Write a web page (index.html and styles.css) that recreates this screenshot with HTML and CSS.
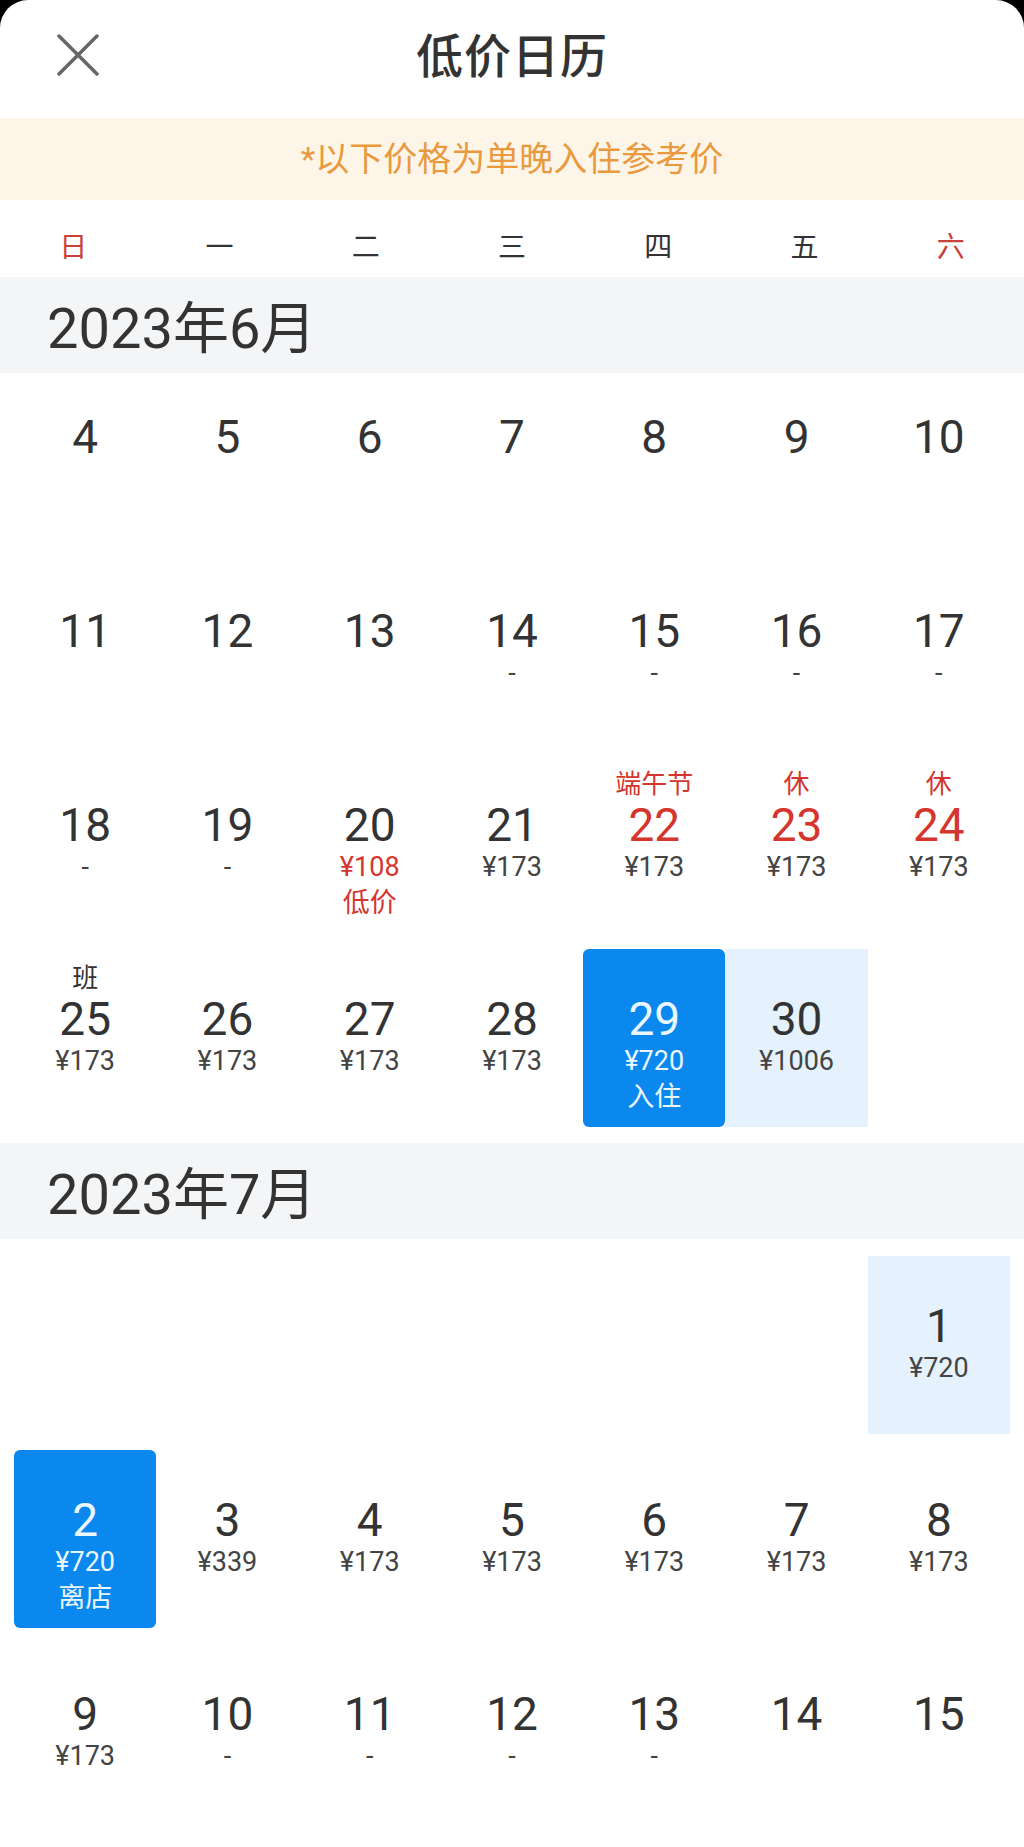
FILE: index.html
```html
<!DOCTYPE html>
<html lang="zh-CN">
<head>
  <meta charset="UTF-8">
  <title>低价日历</title>
  <link rel="stylesheet" href="styles.css">
</head>
<body>

  <div class="sheet">
    <div class="topbar">
      <button class="close" aria-label="关闭">
        <svg width="42" height="42" viewBox="0 0 42 42">
          <path d="M2 2 L40 40 M40 2 L2 40" stroke="#666" stroke-width="3.5" stroke-linecap="round" fill="none"/>
        </svg>
      </button>
      <h1>低价日历</h1>
    </div>

    <div class="notice">*以下价格为单晚入住参考价</div>

    <div class="weekdays">
      <span class="weekend">日</span>
      <span>一</span>
      <span>二</span>
      <span>三</span>
      <span>四</span>
      <span>五</span>
      <span class="weekend">六</span>
    </div>

    <!-- 六月：月份标题吸顶，第一行被压住一点 -->
    <div class="month">
      <div class="month-title pinned">2023年6月</div>
      <div class="days days--scrolled">
        <div class="day"><span class="tag"></span><span class="num">4</span></div>
        <div class="day"><span class="tag"></span><span class="num">5</span></div>
        <div class="day"><span class="tag"></span><span class="num">6</span></div>
        <div class="day"><span class="tag"></span><span class="num">7</span></div>
        <div class="day"><span class="tag"></span><span class="num">8</span></div>
        <div class="day"><span class="tag"></span><span class="num">9</span></div>
        <div class="day"><span class="tag"></span><span class="num">10</span></div>

        <div class="day"><span class="tag"></span><span class="num">11</span></div>
        <div class="day"><span class="tag"></span><span class="num">12</span></div>
        <div class="day"><span class="tag"></span><span class="num">13</span></div>
        <div class="day"><span class="tag"></span><span class="num">14</span><span class="price">-</span></div>
        <div class="day"><span class="tag"></span><span class="num">15</span><span class="price">-</span></div>
        <div class="day"><span class="tag"></span><span class="num">16</span><span class="price">-</span></div>
        <div class="day"><span class="tag"></span><span class="num">17</span><span class="price">-</span></div>

        <div class="day"><span class="tag"></span><span class="num">18</span><span class="price">-</span></div>
        <div class="day"><span class="tag"></span><span class="num">19</span><span class="price">-</span></div>
        <div class="day low"><span class="tag"></span><span class="num">20</span><span class="price">¥108</span><span class="note">低价</span></div>
        <div class="day"><span class="tag"></span><span class="num">21</span><span class="price">¥173</span></div>
        <div class="day holiday"><span class="tag">端午节</span><span class="num">22</span><span class="price">¥173</span></div>
        <div class="day holiday"><span class="tag">休</span><span class="num">23</span><span class="price">¥173</span></div>
        <div class="day holiday"><span class="tag">休</span><span class="num">24</span><span class="price">¥173</span></div>

        <div class="day"><span class="tag">班</span><span class="num">25</span><span class="price">¥173</span></div>
        <div class="day"><span class="tag"></span><span class="num">26</span><span class="price">¥173</span></div>
        <div class="day"><span class="tag"></span><span class="num">27</span><span class="price">¥173</span></div>
        <div class="day"><span class="tag"></span><span class="num">28</span><span class="price">¥173</span></div>
        <div class="day selected"><span class="tag"></span><span class="num">29</span><span class="price">¥720</span><span class="note">入住</span></div>
        <div class="day in-range"><span class="tag"></span><span class="num">30</span><span class="price">¥1006</span></div>
      </div>
    </div>

    <div class="month">
      <div class="month-title">2023年7月</div>
      <div class="days">
        <div class="day empty"></div>
        <div class="day empty"></div>
        <div class="day empty"></div>
        <div class="day empty"></div>
        <div class="day empty"></div>
        <div class="day empty"></div>
        <div class="day in-range"><span class="tag"></span><span class="num">1</span><span class="price">¥720</span></div>

        <div class="day selected"><span class="tag"></span><span class="num">2</span><span class="price">¥720</span><span class="note">离店</span></div>
        <div class="day"><span class="tag"></span><span class="num">3</span><span class="price">¥339</span></div>
        <div class="day"><span class="tag"></span><span class="num">4</span><span class="price">¥173</span></div>
        <div class="day"><span class="tag"></span><span class="num">5</span><span class="price">¥173</span></div>
        <div class="day"><span class="tag"></span><span class="num">6</span><span class="price">¥173</span></div>
        <div class="day"><span class="tag"></span><span class="num">7</span><span class="price">¥173</span></div>
        <div class="day"><span class="tag"></span><span class="num">8</span><span class="price">¥173</span></div>

        <div class="day"><span class="tag"></span><span class="num">9</span><span class="price">¥173</span></div>
        <div class="day"><span class="tag"></span><span class="num">10</span><span class="price">-</span></div>
        <div class="day"><span class="tag"></span><span class="num">11</span><span class="price">-</span></div>
        <div class="day"><span class="tag"></span><span class="num">12</span><span class="price">-</span></div>
        <div class="day"><span class="tag"></span><span class="num">13</span><span class="price">-</span></div>
        <div class="day"><span class="tag"></span><span class="num">14</span></div>
        <div class="day"><span class="tag"></span><span class="num">15</span></div>
      </div>
    </div>
  </div>

</body>
</html>
```

FILE: styles.css
```css
* {
  box-sizing: border-box;
}

body {
  margin: 0;
  padding: 0;
  background-color: #000;
  font-family: Roboto, "Noto Sans CJK SC", sans-serif;
  color: #333;
}

.sheet {
  background-color: #ffffff;
  border-radius: 28px 28px 0 0;
  min-height: 1847px;
  overflow: hidden;
}

/* 顶部标题栏 */
.topbar {
  position: relative;
  height: 118px;
  display: flex;
  justify-content: center;
  align-items: center;
}

.topbar h1 {
  margin: 0 0 4px;
  font-size: 47px;
  font-weight: 500;
  line-height: 56px;
  letter-spacing: 1px;
  color: #333;
}

.close {
  position: absolute;
  left: 57px;
  top: 34px;
  width: 42px;
  height: 42px;
  padding: 0;
  border: none;
  background: none;
  cursor: pointer;
}

.close svg {
  display: block;
}

.notice {
  height: 82px;
  background-color: #fdf5e8;
  color: #e99a3e;
  font-size: 34px;
  line-height: 82px;
  text-align: center;
  padding-bottom: 2px;
}

.weekdays {
  display: grid;
  grid-template-columns: repeat(7, 1fr);
  height: 77px;
  padding-top: 30px;
  font-size: 28px;
  line-height: 36px;
  text-align: center;
}

.weekdays .weekend {
  color: #c8423b;
}

/* 月份 */
.month-title {
  height: 96px;
  padding-left: 47px;
  background-color: #f4f5f7;
  font-size: 56px;
  line-height: 104px;
  color: #333;
}

.month-title.pinned {
  position: relative;
  z-index: 1;
}

.days {
  display: grid;
  grid-template-columns: repeat(7, 1fr);
  row-gap: 16px;
  padding: 17px 14px 16px;
}

.days--scrolled {
  padding-top: 0;
  margin-top: -6px;
}

.day {
  height: 178px;
  padding-top: 12px;
  display: flex;
  flex-direction: column;
  align-items: center;
}

.day .tag {
  height: 34px;
  font-size: 26px;
  line-height: 34px;
  color: #333;
}

.day .num {
  height: 48px;
  font-size: 46px;
  line-height: 48px;
  color: #333;
}

.day .price {
  height: 36px;
  font-size: 27px;
  line-height: 36px;
  color: #444;
}

.day .note {
  height: 36px;
  font-size: 27px;
  line-height: 36px;
}

.holiday .tag,
.holiday .num {
  color: #d4352d;
}

.low .price,
.low .note {
  color: #d4352d;
}

.selected {
  background-color: #0b88ed;
  border-radius: 6px;
}

.selected .num,
.selected .price,
.selected .note {
  color: #eaf7ff;
}

.in-range {
  background-color: #e5f2fd;
}
```
